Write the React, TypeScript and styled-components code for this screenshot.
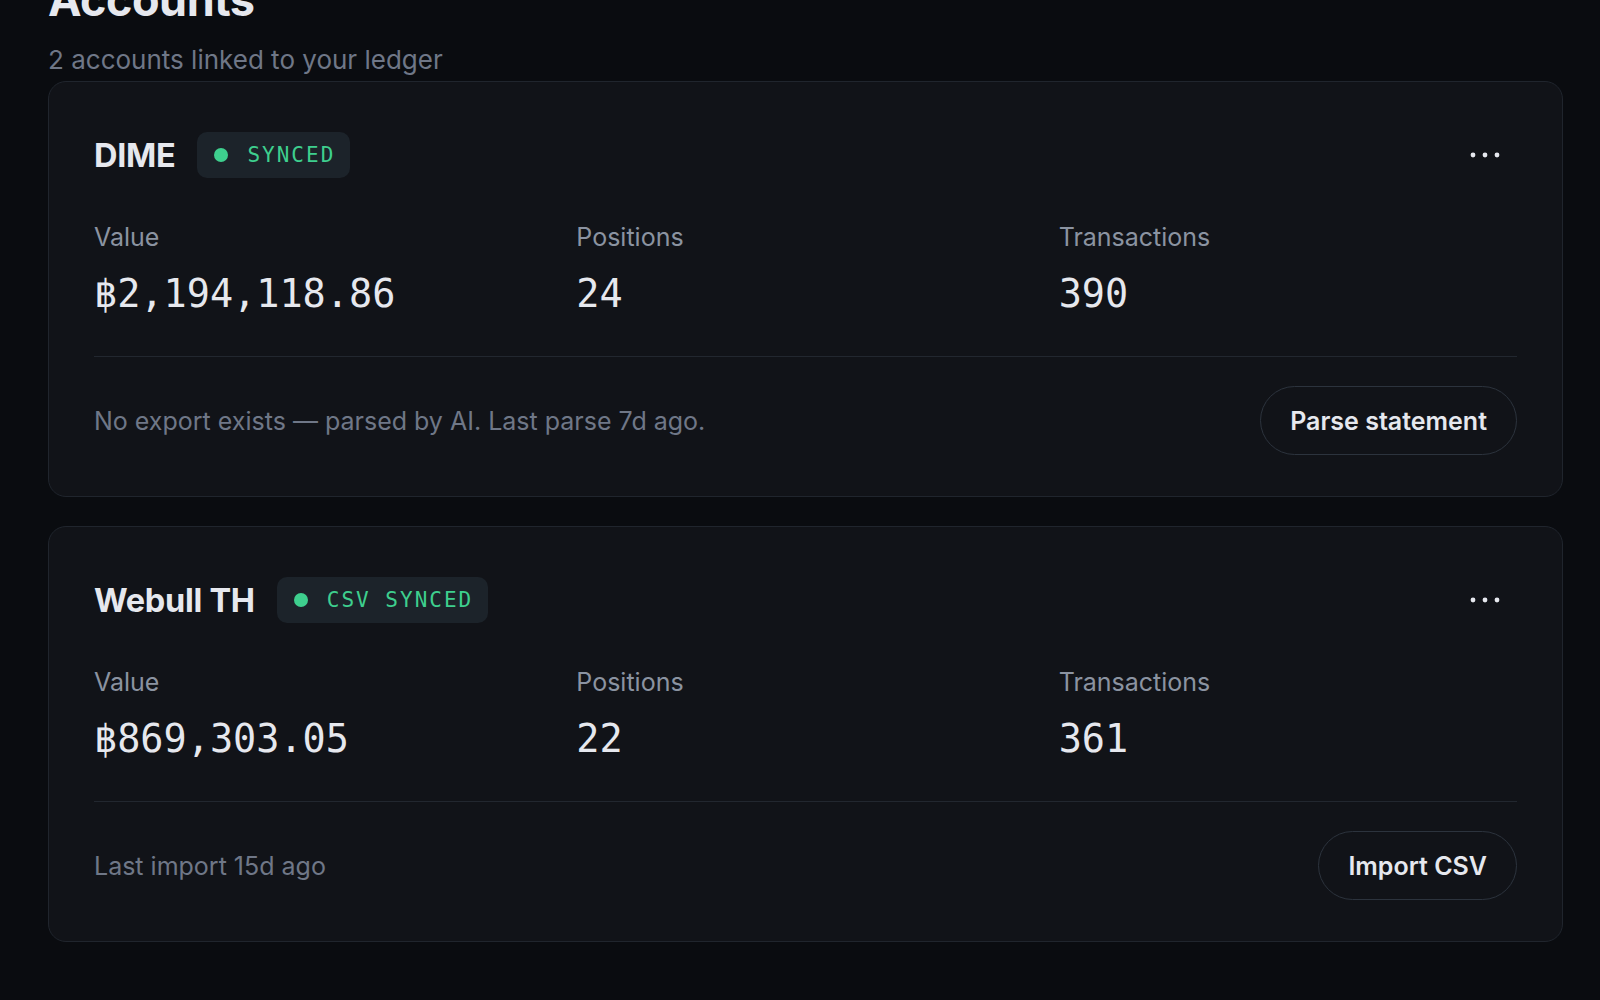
import styled, { createGlobalStyle } from 'styled-components';

const GlobalStyle = createGlobalStyle`
  html, body {
    margin: 0;
    padding: 0;
    background-color: #0a0c10;
  }
  body {
    font-family: Inter, "Noto Sans", sans-serif;
    color: #e6e8ee;
    overflow: hidden;
  }
`;

const Page = styled.main`
  display: flex;
  flex-direction: column;
  padding: 0 37px 0 48px;
  min-height: 1000px;
  box-sizing: border-box;
`;

const Title = styled.h1`
  margin: -25px 0 0;
  font-size: 45px;
  line-height: 50px;
  font-weight: 700;
  letter-spacing: -0.5px;
  color: #e6e8ee;
`;

const Subtitle = styled.p`
  margin: 17px 0 3px;
  font-size: 26px;
  line-height: 36px;
  color: #6f7787;
`;

const CardList = styled.div`
  display: flex;
  flex-direction: column;
  gap: 29px;
`;

const Card = styled.section`
  display: flex;
  flex-direction: column;
  padding: 46px 45px 41px;
  border: 1px solid #20252d;
  border-radius: 18px;
  background-color: #111318;
`;

const CardHeader = styled.div`
  display: flex;
  align-items: center;
  gap: 22px;
  height: 54px;
`;

const AccountName = styled.h2`
  margin: 0;
  font-size: 32.5px;
  font-weight: 700;
  letter-spacing: -0.3px;
  color: #e6e8ee;
`;

const Badge = styled.span`
  display: inline-flex;
  align-items: center;
  gap: 19px;
  height: 46px;
  padding: 0 15px 0 17px;
  border-radius: 10px;
  background-color: #1c232a;
  color: #3ecf8e;
  font-family: "DejaVu Sans Mono", "Liberation Mono", monospace;
  font-size: 21px;
  letter-spacing: 2px;
`;

const Dot = styled.span`
  width: 14px;
  height: 14px;
  border-radius: 50%;
  background-color: #3ecf8e;
`;

const MenuButton = styled.button`
  display: flex;
  align-items: center;
  justify-content: center;
  margin-left: auto;
  width: 64px;
  height: 54px;
  padding: 0;
  border: none;
  background: none;
  color: #e6e8ee;
  cursor: pointer;
`;

const Stats = styled.div`
  display: grid;
  grid-template-columns: repeat(3, 1fr);
  gap: 24px;
  padding: 38px 0 39px;
  border-bottom: 1px solid #22272f;
`;

const Stat = styled.div`
  display: flex;
  flex-direction: column;
  gap: 17px;
`;

const StatLabel = styled.span`
  font-size: 25px;
  line-height: 34px;
  color: #8b93a1;
`;

const StatValue = styled.span`
  font-family: "DejaVu Sans Mono", "Liberation Mono", monospace;
  font-size: 38.5px;
  line-height: 46px;
  color: #e6e8ee;
`;

const Footer = styled.div`
  display: flex;
  align-items: center;
  justify-content: space-between;
  padding-top: 29px;
`;

const Note = styled.span`
  font-size: 25px;
  color: #6f7787;
`;

const ActionButton = styled.button`
  height: 69px;
  padding: 0 29px;
  border: 1.5px solid #2c333d;
  border-radius: 999px;
  background: transparent;
  color: #e6e8ee;
  font-family: Inter, "Noto Sans", sans-serif;
  font-size: 25px;
  font-weight: 600;
  cursor: pointer;
`;

const MoreIcon = () => (
  <svg width="40" height="10" viewBox="0 0 40 10" fill="currentColor">
    <circle cx="8" cy="5" r="2.4" />
    <circle cx="20" cy="5" r="2.4" />
    <circle cx="32" cy="5" r="2.4" />
  </svg>
);

type Account = {
  name: string;
  status: string;
  value: string;
  positions: number;
  transactions: number;
  note: string;
  action: string;
};

const accounts: Account[] = [
  {
    name: 'DIME',
    status: 'SYNCED',
    value: '฿2,194,118.86',
    positions: 24,
    transactions: 390,
    note: 'No export exists — parsed by AI. Last parse 7d ago.',
    action: 'Parse statement',
  },
  {
    name: 'Webull TH',
    status: 'CSV SYNCED',
    value: '฿869,303.05',
    positions: 22,
    transactions: 361,
    note: 'Last import 15d ago',
    action: 'Import CSV',
  },
];

function AccountCard({ account }: { account: Account }) {
  return (
    <Card>
      <CardHeader>
        <AccountName>{account.name}</AccountName>
        <Badge>
          <Dot />
          {account.status}
        </Badge>
        <MenuButton aria-label="More">
          <MoreIcon />
        </MenuButton>
      </CardHeader>

      <Stats>
        <Stat>
          <StatLabel>Value</StatLabel>
          <StatValue>{account.value}</StatValue>
        </Stat>
        <Stat>
          <StatLabel>Positions</StatLabel>
          <StatValue>{account.positions}</StatValue>
        </Stat>
        <Stat>
          <StatLabel>Transactions</StatLabel>
          <StatValue>{account.transactions}</StatValue>
        </Stat>
      </Stats>

      <Footer>
        <Note>{account.note}</Note>
        <ActionButton>{account.action}</ActionButton>
      </Footer>
    </Card>
  );
}

export default function App() {
  return (
    <>
      <GlobalStyle />
      <Page>
        <Title>Accounts</Title>
        <Subtitle>{accounts.length} accounts linked to your ledger</Subtitle>
        <CardList>
          {accounts.map((account) => (
            <AccountCard key={account.name} account={account} />
          ))}
        </CardList>
      </Page>
    </>
  );
}
